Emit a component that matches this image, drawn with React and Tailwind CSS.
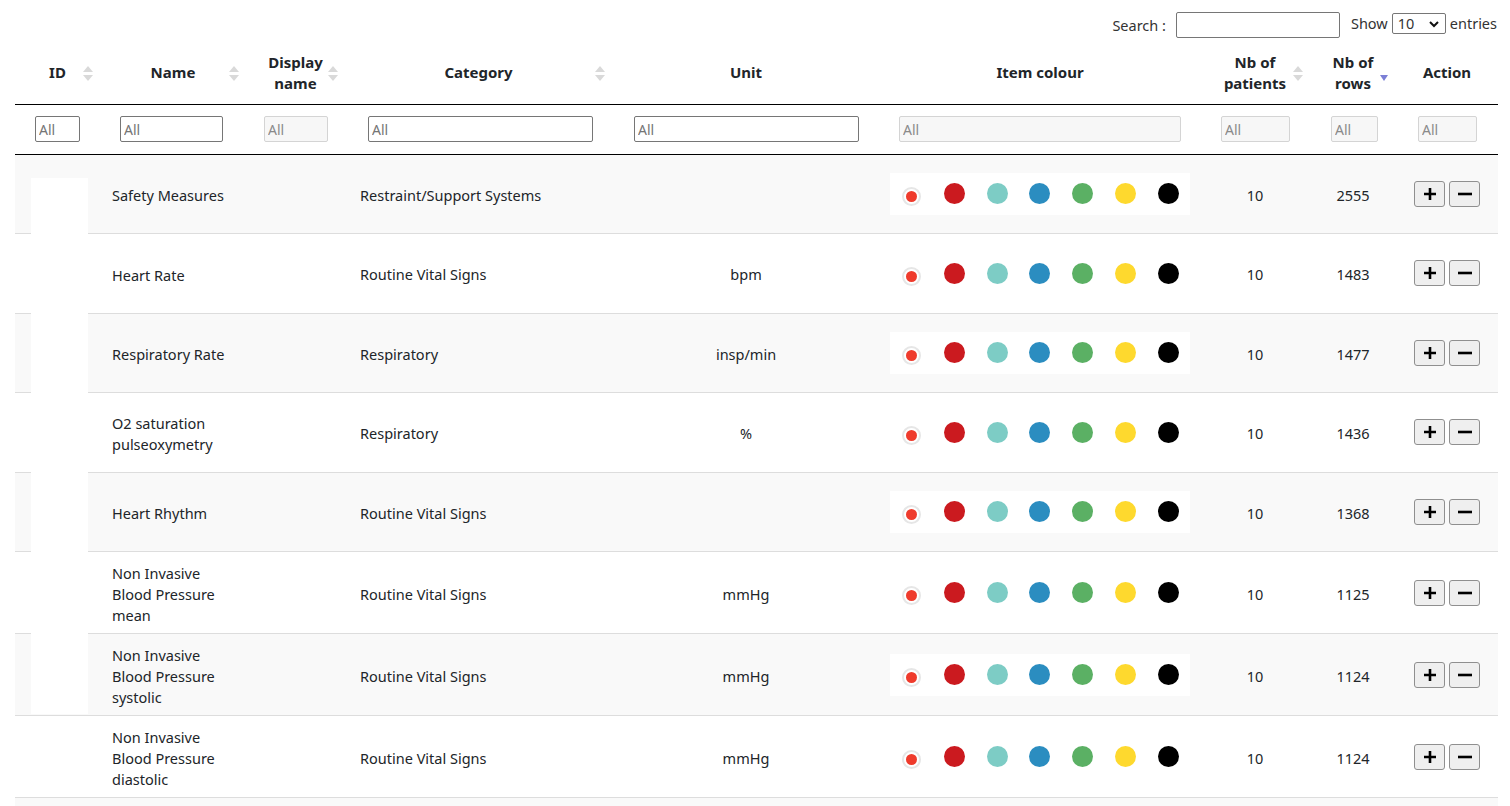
import React from 'react';

const rows = [
  { name: 'Safety Measures', category: 'Restraint/Support Systems', unit: '', patients: 10, count: 2555 },
  { name: 'Heart Rate', category: 'Routine Vital Signs', unit: 'bpm', patients: 10, count: 1483 },
  { name: 'Respiratory Rate', category: 'Respiratory', unit: 'insp/min', patients: 10, count: 1477 },
  { name: 'O2 saturation pulseoxymetry', category: 'Respiratory', unit: '%', patients: 10, count: 1436 },
  { name: 'Heart Rhythm', category: 'Routine Vital Signs', unit: '', patients: 10, count: 1368 },
  { name: 'Non Invasive Blood Pressure mean', category: 'Routine Vital Signs', unit: 'mmHg', patients: 10, count: 1125 },
  { name: 'Non Invasive Blood Pressure systolic', category: 'Routine Vital Signs', unit: 'mmHg', patients: 10, count: 1124 },
  { name: 'Non Invasive Blood Pressure diastolic', category: 'Routine Vital Signs', unit: 'mmHg', patients: 10, count: 1124 },
  { name: 'Temperature Fahrenheit', category: 'Routine Vital Signs', unit: '°F', patients: 10, count: 1012 },
  { name: 'GCS - Eye Opening', category: 'Neurological', unit: '', patients: 10, count: 998 },
];

const colours = ['bg-[#cb1a1f]', 'bg-[#7dccc5]', 'bg-[#2b8dc0]', 'bg-[#5bb064]', 'bg-[#fed92e]', 'bg-black'];

const SortIcon = () => (
  <svg width="10" height="17" viewBox="0 0 10 17" className="absolute right-[7px] top-[27px]">
    <polygon points="0,7 5,1 10,7" fill="#d9d9d9" />
    <polygon points="0,10 5,16 10,10" fill="#d9d9d9" />
  </svg>
);

const SortDesc = () => (
  <svg width="10" height="17" viewBox="0 0 10 17" className="absolute right-[7px] top-[27px]">
    <polygon points="1,10 5,16 9,10" fill="#7b7fd6" />
  </svg>
);

const ColourPicker = () => (
  <div className="ml-[10px] w-[300px] h-[42px] bg-white grid grid-cols-7 items-center">
    <div className="flex justify-center">
      <div className="mt-[6px] w-[19px] h-[19px] rounded-full border-[2px] border-[#e6e6e6] flex items-center justify-center">
        <div className="w-[11px] h-[11px] rounded-full bg-[#ef3b2c]" />
      </div>
    </div>
    {colours.map((c, i) => (
      <div key={i} className="flex justify-center">
        <div className={`w-[21px] h-[21px] rounded-full ${c}`} />
      </div>
    ))}
  </div>
);

const enabledInput = "h-[26px] border border-[#767676] rounded-[2px] bg-white px-[3px] text-[14px] placeholder:text-[#757575] outline-none";
const disabledInput = "h-[26px] border border-[#d4d4d4] rounded-[2px] bg-[#f7f7f7] px-[3px] text-[14px] placeholder:text-[#8a8a8a] outline-none";

const App = () => {
  return (
    <div className="min-h-screen bg-white text-[#212529] font-['Noto_Sans',sans-serif]">
      <div className="px-[15px] pt-[12px] relative">
        {/* Search / page length */}
        <div className="flex justify-end items-start h-[26px] text-[14.5px] text-[#333] -mr-[2px]">
          <span className="mt-[3px] mr-[10px]">Search :</span>
          <input className="w-[164px] h-[26px] border border-[#767676] rounded-[2px] outline-none" />
          <span className="ml-[11px] mr-[4px] mt-[1px]">Show</span>
          <div className="relative mt-[1px] w-[54px] h-[21px] border border-[#767676] rounded-[2px] flex items-center pl-[5px]">
            <span className="text-[14.5px] leading-none">10</span>
            <svg width="10" height="7" viewBox="0 0 10 7" className="absolute right-[6px] top-[7px]">
              <polyline points="1,1 5,5 9,1" fill="none" stroke="#111" strokeWidth="2" />
            </svg>
          </div>
          <span className="ml-[4px] mt-[1px]">entries</span>
        </div>

        <div className="relative">
          <table className="w-[1483px] table-fixed border-collapse text-[14.5px]">
            <colgroup>
              <col className="w-[85px]" />
              <col className="w-[146px]" />
              <col className="w-[99px]" />
              <col className="w-[267px]" />
              <col className="w-[268px]" />
              <col className="w-[320px]" />
              <col className="w-[110px]" />
              <col className="w-[86px]" />
              <col className="w-[102px]" />
            </colgroup>
            <thead>
              <tr className="h-[66px] border-b border-black font-bold text-[15px] leading-[21px]">
                <th className="relative font-bold pt-[4px]">ID<SortIcon /></th>
                <th className="relative font-bold pt-[4px]">Name<SortIcon /></th>
                <th className="relative font-bold pt-[4px]">Display<br />name<SortIcon /></th>
                <th className="relative font-bold pt-[4px]">Category<SortIcon /></th>
                <th className="font-bold pt-[4px]">Unit</th>
                <th className="font-bold pt-[4px]">Item colour</th>
                <th className="relative font-bold pt-[4px]">Nb of<br />patients<SortIcon /></th>
                <th className="relative font-bold pt-[4px]">Nb of<br />rows<SortDesc /></th>
                <th className="font-bold pt-[4px]">Action</th>
              </tr>
              <tr className="h-[50px] border-b border-black">
                <td className="pl-[20px]"><input placeholder="All" className={`w-[45px] ${enabledInput}`} /></td>
                <td className="pl-[20px]"><input placeholder="All" className={`w-[103px] ${enabledInput}`} /></td>
                <td className="pl-[18px]"><input placeholder="All" disabled className={`w-[64px] ${disabledInput}`} /></td>
                <td className="pl-[23px]"><input placeholder="All" className={`w-[225px] ${enabledInput}`} /></td>
                <td className="pl-[22px]"><input placeholder="All" className={`w-[225px] ${enabledInput}`} /></td>
                <td className="pl-[19px]"><input placeholder="All" disabled className={`w-[282px] ${disabledInput}`} /></td>
                <td className="pl-[21px]"><input placeholder="All" disabled className={`w-[69px] ${disabledInput}`} /></td>
                <td className="pl-[21px]"><input placeholder="All" disabled className={`w-[47px] ${disabledInput}`} /></td>
                <td className="pl-[22px]"><input placeholder="All" disabled className={`w-[59px] ${disabledInput}`} /></td>
              </tr>
            </thead>
            <tbody>
              {rows.map((row, index) => (
                <tr key={index} className={`border-b border-[#dddddd] ${index % 2 === 0 ? 'bg-[#f9f9f9]' : 'bg-white'}`}>
                  <td className="pt-[11px] pb-[7px]"></td>
                  <td className="pt-[11px] pb-[7px] pl-[12px] pr-[10px] leading-[21px]">{row.name}</td>
                  <td className="pt-[11px] pb-[7px]"></td>
                  <td className="pt-[11px] pb-[7px] pl-[15px]">{row.category}</td>
                  <td className="pt-[11px] pb-[7px] text-center">{row.unit}</td>
                  <td className="py-[9px]"><div className="my-[9.25px]"><ColourPicker /></div></td>
                  <td className="pt-[11px] pb-[7px] text-center">{row.patients}</td>
                  <td className="pt-[11px] pb-[7px] text-center">{row.count}</td>
                  <td className="py-[9px]">
                    <div className="flex justify-center gap-[4px]">
                      <button className="w-[31px] h-[26px] bg-[#efefef] border border-[#8f8f8f] rounded-[3px] flex items-center justify-center">
                        <svg width="14" height="14" viewBox="0 0 14 14"><path d="M7 1v12M1 7h12" stroke="#000" strokeWidth="2.6" /></svg>
                      </button>
                      <button className="w-[31px] h-[26px] bg-[#efefef] border border-[#8f8f8f] rounded-[3px] flex items-center justify-center">
                        <svg width="16" height="14" viewBox="0 0 16 14"><path d="M1 7h14" stroke="#000" strokeWidth="2.6" /></svg>
                      </button>
                    </div>
                  </td>
                </tr>
              ))}
            </tbody>
          </table>
          {/* blank block over the ID column */}
          <div className="absolute left-[16px] top-[140px] w-[57px] h-[536px] bg-white" />
        </div>
      </div>
    </div>
  );
};

export default App;
